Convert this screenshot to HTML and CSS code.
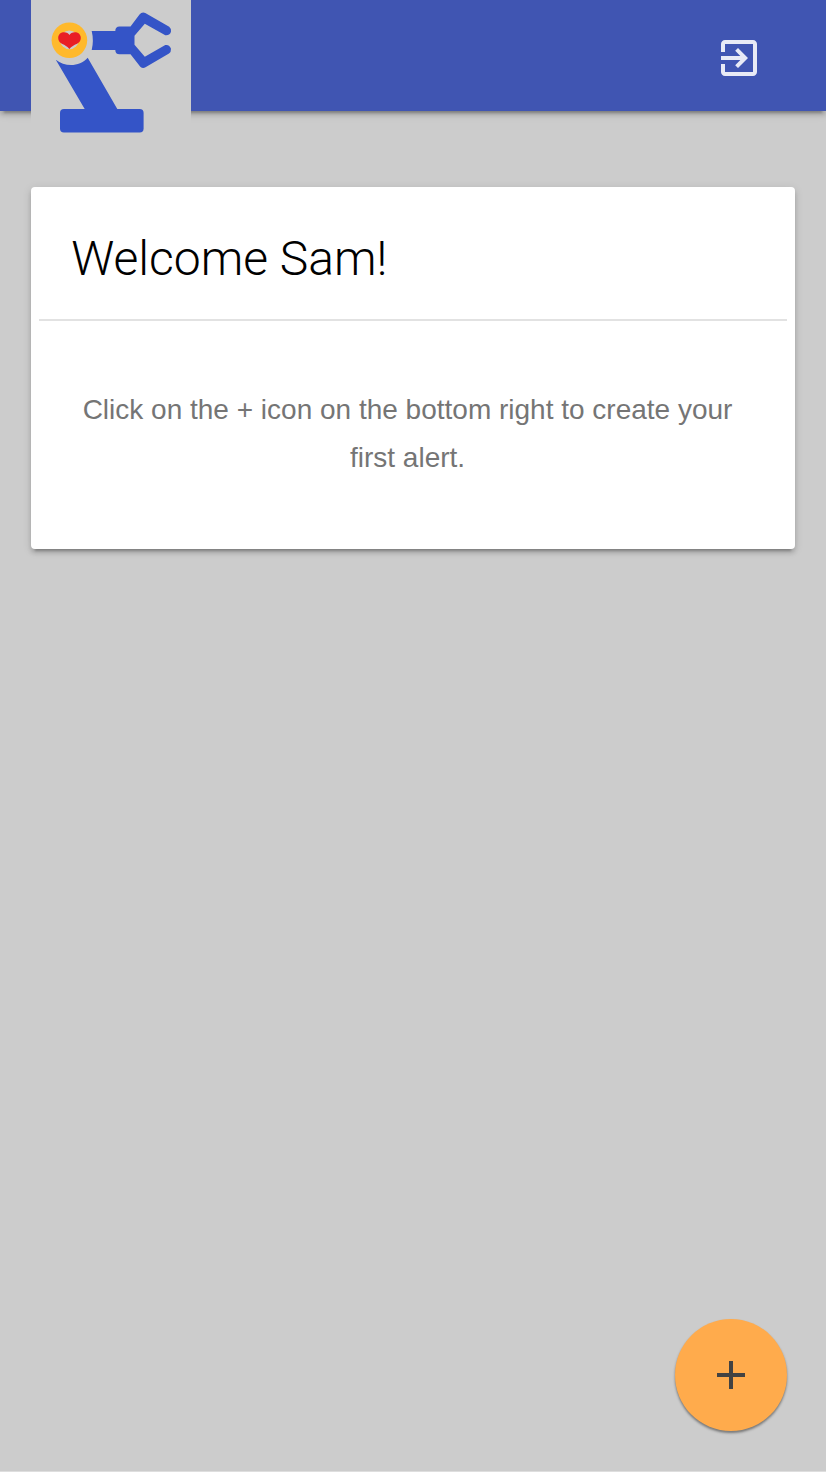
FILE: index.html
```html
<!DOCTYPE html>
<html lang="en">
<head>
<meta charset="utf-8">
<title>Alerts</title>
<link rel="stylesheet" href="styles.css">
</head>
<body>
<div class="page">
  <header class="header">
    <a class="logo" href="#" aria-label="Home">
      <svg width="160" height="150" viewBox="31 0 160 150">
        <g fill="#3454c7">
          <path d="M91.700 31H115.300Q115.300 26.500 119.500 26.500H130.500L139.500 14.500Q141.800 11.500 145.300 12.900L169.200 26.800Q171.300 28.500 171 31.500Q170 35.700 165.300 35.200L144.800 23.800L134.500 35.800V44.800L144.800 56.800L165.300 45Q169.500 44.200 171 48.800Q171.200 52 169 53.500L145.500 67.300Q142.800 68.800 140.300 66.700L130.500 54.200H119.500Q115.300 54.200 115.300 50H91.700Q94 40.500 91.700 31Z"/>
          <path d="M55.800 59.700C65 67 79.500 67 87.700 57.700L117.300 109H84.700Z"/>
          <rect x="60" y="109" width="83.600" height="23.500" rx="4"/>
        </g>
        <circle cx="69.400" cy="40.300" r="17.800" fill="#ffb92b"/>
        <circle cx="69.400" cy="39.900" r="9.300" fill="#ccc"/>
        <path d="M69.400 35C68 31.200 58.200 30.500 58.200 38C58.200 44.500 65.500 43.500 69.400 49C73.500 43.500 80.800 44.500 80.800 38C80.800 30.500 71 31.200 69.400 35Z" fill="#e91e25"/>
      </svg>
    </a>
    <a class="exit" href="#" aria-label="Sign out">
      <svg width="48" height="48" viewBox="0 0 24 24"><path d="M10.090 15.590L11.500 17l5-5-5-5-1.410 1.410L12.670 11H3v2h9.670l-2.580 2.590zM19 3H5c-1.110 0-2 .9-2 2v4h2V5h14v14H5v-4H3v4c0 1.100.89 2 2 2h14c1.100 0 2-.9 2-2V5c0-1.100-.9-2-2-2z"/></svg>
    </a>
  </header>
  <main class="content">
    <section class="card">
      <h1 class="card-title">Welcome Sam!</h1>
      <p class="card-text">Click on the + icon on the bottom right to create your first alert.</p>
    </section>
  </main>
  <button class="fab" aria-label="Create alert">
    <svg width="48" height="48" viewBox="0 0 24 24"><path d="M19 13h-6v6h-2v-6H5v-2h6V5h2v6h6v2z"/></svg>
  </button>
</div>
</body>
</html>
```

FILE: styles.css
```css
* { box-sizing: border-box; }

body {
  margin: 0;
  background: #ccc;
  font-family: "Liberation Sans", Arial, sans-serif;
}

.page {
  position: relative;
  height: 1472px;
  background: #ccc;
  border-bottom: 1px solid #dedede;
}

.header {
  display: flex;
  align-items: flex-start;
  justify-content: space-between;
  height: 111px;
  padding: 0 62.600px 0 31px;
  background: #4055b2;
  box-shadow: 0 4px 4px rgba(0, 0, 0, .14), 0 6px 2px -4px rgba(0, 0, 0, .2), 0 2px 10px rgba(0, 0, 0, .12);
}

.logo {
  flex: none;
  width: 160.400px;
  height: 150px;
  background: #ccc;
}

.logo svg, .exit svg, .fab svg { display: block; }

.exit {
  margin-top: 34px;
  fill: #e8eaf6;
}

.content { padding: 76px 30.600px 0 31.200px; }

.card {
  height: 362px;
  padding: 0 8px;
  background: #fff;
  border-radius: 4px;
  box-shadow: 0 4px 4px rgba(0, 0, 0, .14), 0 6px 2px -4px rgba(0, 0, 0, .2), 0 2px 10px rgba(0, 0, 0, .12);
}

.card-title {
  height: 134px;
  margin: 0;
  padding: 40px 32px 0;
  border-bottom: 2px solid #e2e2e2;
  font: 300 48px/64px Roboto, sans-serif;
  color: #000;
}

.card-text {
  margin: 0;
  padding: 65px 43.500px 0 32px;
  font-size: 28px;
  line-height: 48px;
  text-align: center;
  color: #757575;
}

.fab {
  position: absolute;
  right: 38.600px;
  bottom: 40px;
  display: flex;
  align-items: center;
  justify-content: center;
  width: 112px;
  height: 112px;
  padding: 0;
  border: 0;
  border-radius: 50%;
  background: #ffab4c;
  fill: #424242;
  box-shadow: 0 2px 3px rgba(0, 0, 0, .24), 0 2px 2px rgba(0, 0, 0, .22);
}
```
